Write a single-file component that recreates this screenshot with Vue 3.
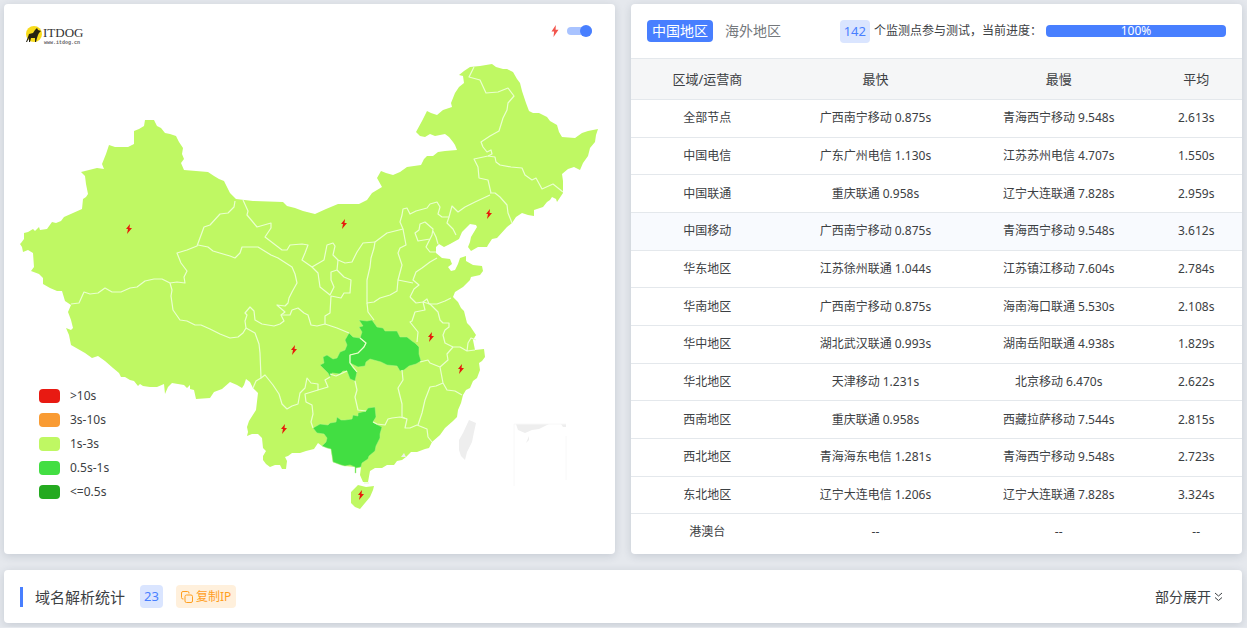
<script setup>
import { ref } from 'vue'

const showBolts = ref(true)
const region = ref('cn')

const legend = [
  { label: '>10s', tone: 'red' },
  { label: '3s-10s', tone: 'orange' },
  { label: '1s-3s', tone: 'lime' },
  { label: '0.5s-1s', tone: 'green' },
  { label: '<=0.5s', tone: 'dark' },
]

const rows = [
  ['全部节点', '广西南宁移动 0.875s', '青海西宁移动 9.548s', '2.613s'],
  ['中国电信', '广东广州电信 1.130s', '江苏苏州电信 4.707s', '1.550s'],
  ['中国联通', '重庆联通 0.958s', '辽宁大连联通 7.828s', '2.959s'],
  ['中国移动', '广西南宁移动 0.875s', '青海西宁移动 9.548s', '3.612s'],
  ['华东地区', '江苏徐州联通 1.044s', '江苏镇江移动 7.604s', '2.784s'],
  ['华南地区', '广西南宁移动 0.875s', '海南海口联通 5.530s', '2.108s'],
  ['华中地区', '湖北武汉联通 0.993s', '湖南岳阳联通 4.938s', '1.829s'],
  ['华北地区', '天津移动 1.231s', '北京移动 6.470s', '2.622s'],
  ['西南地区', '重庆联通 0.958s', '西藏拉萨移动 7.544s', '2.815s'],
  ['西北地区', '青海海东电信 1.281s', '青海西宁移动 9.548s', '2.723s'],
  ['东北地区', '辽宁大连电信 1.206s', '辽宁大连联通 7.828s', '3.324s'],
  ['港澳台', '--', '--', '--'],
]

const bolts = [[129, 229], [344, 224], [489, 214], [431, 337], [461, 369], [294, 350], [284, 429], [361, 495]]

const mainland = 'M21 243L24 239 24 233 28 232 33 229 35 231 39 227 40 230 47 229 52 222 56 223 61 221 64 217 73 213 82 209 83 199 86 197 88 194 86 184 85 176 81 172 89 170 97 168 104 169 102 164 106 154 109 145 115 147 128 147 134 144 134 131 139 129 144 126 145 120 154 120 157 126 161 128 165 133 170 134 176 136 179 142 183 148 182 154 184 159 181 163 184 170 208 172 214 176 219 179 224 181 230 193 236 199 253 201 283 202 287 206 295 208 303 211 315 214 326 209 338 204 359 204 367 200 372 193 382 187 377 178 381 171 386 173 393 175 400 172 407 167 421 165 424 159 427 156 433 156 438 152 445 151 457 150 455 145 453 142 449 137 445 134 435 136 430 134 425 137 420 136 416 132 422 121 427 111 431 113 437 115 443 110 452 107 451 103 455 93 459 87 464 83 463 76 459 75 464 71 470 67 480 66 492 64 496 67 503 69 507 69 513 72 517 79 520 83 522 91 526 103 529 111 533 113 539 113 547 117 550 121 557 125 559 132 562 137 575 138 582 133 588 131 598 129 596 135 595 142 590 148 588 156 583 163 580 170 574 167 568 169 562 174 563 181 563 193 557 202 556 199 552 197 550 200 547 202 543 207 534 210 534 216 528 215 522 213 516 217 512 223 507 227 497 238 492 239 488 245 487 247 478 247 471 251 468 247 470 242 471 237 477 227 476 225 470 224 462 232 459 239 450 244 444 247 439 244 436 247 436 253 442 258 450 259 452 264 448 267 451 271 455 270 458 264 460 258 466 256 466 261 473 265 482 266 483 271 480 275 471 277 470 280 463 287 455 292 453 297 458 302 461 308 464 311 467 323 470 326 476 335 473 340 475 350 484 349 485 357 482 361 479 363 480 370 477 378 473 381 470 388 466 390 463 395 461 403 458 410 457 417 453 421 445 428 440 435 432 442 429 448 425 449 417 452 411 452 406 457 402 460 397 461 394 465 387 465 382 468 375 468 370 471 368 482 363 482 360 475 361 467 356 468 356 473 355 473 355 467 345 466 333 462 331 449 322 446 318 443 314 449 306 451 300 453 297 453 292 453 288 456 285 457 287 461 286 469 282 469 280 465 275 465 270 467 266 464 263 460 263 456 266 451 263 448 262 438 258 434 252 434 247 436 248 432 247 427 249 421 256 410 258 393 253 388 250 382 246 379 244 385 242 388 237 385 230 382 222 389 214 392 210 398 196 399 194 390 190 389 190 385 187 388 184 385 178 384 172 383 168 387 165 394 164 384 157 387 150 387 143 386 140 384 138 386 134 381 130 380 125 377 121 377 119 373 113 368 105 361 98 356 92 358 85 353 71 345 69 335 66 328 71 330 73 328 71 320 68 312 71 305 65 301 62 291 57 291 50 288 43 284 43 278 39 274 31 271 34 267 33 253 28 250 23 252 22 247 20 244Z'

const chongqing = 'M349 333L353 337 360 338 366 343 364 347 358 353 350 355 350 363 353 368 357 372 355 381 350 379 347 371 343 371 340 374 332 373 330 377 328 373 325 370 320 365 324 363 323 357 327 355 333 359 337 358 340 352 345 350 347 345 345 340Z'
const hubei = 'M359 320L367 321 372 320 377 327 383 328 385 331 397 331 400 337 407 337 412 341 415 343 419 347 419 354 421 361 416 364 409 366 404 370 400 371 397 366 387 365 381 362 370 359 366 362 365 366 358 367 350 363 350 355 358 353 364 347 366 343 360 338 362 332 359 327 363 326Z'
const guangxi = 'M313 428L320 424 328 425 330 423 336 422 337 417 341 420 345 420 352 419 353 415 358 416 358 413 366 411 368 408 375 407 376 417 373 422 376 424 382 427 380 434 380 438 376 446 375 451 369 456 368 459 362 463 361 467 356 468 356 473 355 473 355 467 350 465 345 466 341 465 333 462 331 449 327 448 322 446 326 442 327 438 324 434 317 433Z'

const borders = [
  'M71 304L79 303 84 292 90 294 98 293 105 288 112 292 121 292 130 288 137 287 145 281 154 279 162 279 170 283 177 282 185 283 184 277 187 271 181 263 177 253 187 250 197 246 204 227 210 225 220 214 228 213 234 207 235 201',
  'M170 283L172 290 171 296 173 310 180 320 187 321 195 325 201 325 210 329 220 334 230 338 238 337 243 333 246 328 245 321 247 315 245 313 250 307 254 311 255 320 262 324 268 325 274 326 280 324 284 321 281 315 285 312 278 306 277 305 285 306 288 303 289 298 292 292 297 283 295 274 292 267 278 258 271 255 258 247 242 247 240 253 235 258 230 256 213 251 208 247 198 245',
  'M281 315L290 315 292 310 298 308 304 313 308 315 311 325 317 326 325 324 337 328 349 333',
  'M246 328L255 333 259 344 260 353 261 378 256 381 253 388',
  'M261 378L265 375 273 385 279 394 282 404 287 409 292 406 298 404 300 393 305 388 307 378 311 383 318 384 318 390 328 387 325 380 330 377',
  'M318 390L305 394 306 402 312 405 313 414 311 422 313 428',
  'M347 371L336 376 330 374M355 381L357 390 355 397 358 410 366 411',
  'M402 370L403 380 398 388 402 404 402 418',
  'M373 422L377 424 385 425 388 419 392 418 400 417 407 419 405 428 410 428 417 425 427 429 428 437 432 442',
  'M402 417L407 419M418 425L422 413 425 400 430 387 436 386 443 383',
  'M420 362L428 360 430 363 440 367 443 383 447 390 455 391 462 395',
  'M440 367L448 360 447 354 453 347 460 347 467 351 475 350M467 351L468 343 471 338 476 340',
  'M453 347L445 343 443 335 445 330 449 327 449 323 443 323 440 320 438 312 430 304 423 302 425 310 415 312 412 321 410 322 418 332 417 342',
  'M410 297L416 303 423 302 427 299 429 304 437 304 445 301 451 298',
  'M410 297L414 289 419 285 413 280 416 272 422 268 430 262 437 258M413 283L398 280 397 291 390 295 380 298 374 302 367 303 367 280 370 267 371 258 374 248 375 242 387 233 403 229 400 222 402 215 403 209 407 208 410 214 416 211 427 208 430 204 437 202 440 207 438 214 442 217 449 217 452 206 458 212 465 207 475 202 490 195',
  'M367 303L368 312 374 320M403 229L406 245 400 248 398 253 402 265 398 280',
  'M449 217L447 223 453 229 456 235M490 193L495 193 500 197 507 205 508 213 512 223',
  'M415 233L419 230 420 224 425 222 433 229 432 235 430 239 418 241ZM433 231L436 237 438 244M430 239L426 247 430 252 436 252',
  'M375 242L363 243 357 252 352 262 345 263 338 260 333 255 335 246 333 243 327 245 324 260 312 267 302 260 305 253 308 245 302 244 290 245 287 250 282 250 265 237 271 228 271 223 257 227 247 215 248 211 243 200',
  'M312 267L318 273 320 287 330 295 334 287 331 280 331 272 337 270 338 260M337 270L344 277 351 280 350 293 344 293 341 298 331 296 330 313 325 316 325 324',
  'M474 67L469 77 480 80 486 93 498 92 508 88 514 96 508 103 507 110 503 118 499 131 490 136 481 142 483 147 487 152 491 150 492 154 488 156 474 159 478 167 479 178 488 180 491 193',
  'M488 156L495 157 496 162 500 165 511 167 522 168 525 175 532 180 536 178 542 189 553 184 563 192',
]
</script>

<template>
  <main class="page">
    <section class="card map-card">
      <div class="map-bar">
        <svg class="logo" viewBox="0 0 60 22" role="img" aria-label="ITDOG">
          <circle cx="8" cy="9" r="8" fill="#f8dc1c" />
          <path d="M11 3l1 2 3 1-2 2-1 2-1 3-1 4h-1l0-4-4 0-1 4h-1l0-4-2 4h-1l2-5 1-3 4-1 2-3z" fill="#252211" />
          <text x="17" y="12" class="logo-name">ITDOG</text>
          <text x="18" y="19" class="logo-url">www.itdog.cn</text>
        </svg>
        <label class="bolt-switch">
          <svg viewBox="0 0 8 12" class="bolt-icon" aria-hidden="true"><path d="M4.800 0L.5 6.500h2.600L2.500 12 7.500 4.800H4.600z" /></svg>
          <input v-model="showBolts" type="checkbox" aria-label="闪电标记" />
        </label>
      </div>

      <svg class="map" viewBox="4 58 611 496" role="img" aria-label="中国地图">
        <path class="land" :d="mainland" />
        <path class="land" d="M351 492L358 485 366 487 374 486 373 490 370 497 365 503 360 509 355 507 351 503Z" />
        <path class="edge" d="M364 483L369 483" />
        <g class="fast">
          <path :d="chongqing" />
          <path :d="hubei" />
          <path :d="guangxi" />
        </g>
        <path v-for="d in borders" :key="d" class="edge" :d="d" />
        <path class="edge" d="M360 338L366 343 364 347 358 353 350 355 350 363 357 372" />
        <path class="muted" d="M469 420L476 423 474 432 472 442 467 452 465 460 461 456 459 450 459 440 463 433Z" />
        <path class="muted" d="M516 424H549L539 429 532 430 525 433 518 430ZM561 424H566V427L563 427ZM526 443L529 436 529 440ZM401 457L404 453 406 457Z" />
        <path class="inset" d="M514 486V424H566M566 436V480" />
        <g v-if="showBolts" class="bolts">
          <path v-for="[x, y] in bolts" :key="x" :d="`M${x + 1} ${y - 5}l-4 5h2l-1 5 5-6h-2.500z`" />
        </g>
      </svg>

      <ul class="legend">
        <li v-for="item in legend" :key="item.label"><i :class="item.tone"></i>{{ item.label }}</li>
      </ul>
    </section>

    <section class="card stats-card">
      <header class="stats-bar">
        <nav class="tabs">
          <button type="button" :class="{ active: region === 'cn' }" @click="region = 'cn'">中国地区</button>
          <button type="button" :class="{ active: region === 'sea' }" @click="region = 'sea'">海外地区</button>
        </nav>
        <div class="progress-info">
          <span class="badge">142</span>
          <span>个监测点参与测试，当前进度：</span>
          <div class="progress" role="progressbar" aria-valuenow="100">100%</div>
        </div>
      </header>
      <table>
        <thead>
          <tr><th>区域/运营商</th><th>最快</th><th>最慢</th><th>平均</th></tr>
        </thead>
        <tbody>
          <tr v-for="row in rows" :key="row[0]" :class="{ tinted: row[0] === '中国移动' }">
            <td v-for="(cell, i) in row" :key="i">{{ cell }}</td>
          </tr>
        </tbody>
      </table>
    </section>

    <section class="card dns-card">
      <h2>域名解析统计</h2>
      <span class="badge">23</span>
      <button type="button" class="copy">
        <svg viewBox="0 0 12 12" aria-hidden="true"><rect x="4" y="4" width="7.500" height="7.500" rx="1.500" /><path d="M2.500 8H2A1.500 1.500 0 0 1 .5 6.500V2A1.500 1.500 0 0 1 2 .5h4.500A1.500 1.500 0 0 1 8 2v.5" /></svg>
        <span>复制IP</span>
      </button>
      <button type="button" class="expand">
        <span>部分展开</span>
        <svg viewBox="0 0 9 10" aria-hidden="true"><path d="M1 1l3.500 3L8 1M1 5.500l3.500 3L8 5.500" /></svg>
      </button>
    </section>
  </main>
</template>

<style>
body {
  background: #e5e8ed;
}
</style>

<style scoped>
.page {
  display: grid;
  grid-template-columns: minmax(0, 1fr) minmax(0, 1fr);
  gap: 16px;
  padding: 4px 5px 4px 4px;
  color: #3c4043;
  font: 12px/18px "Noto Sans", "Noto Sans CJK SC", sans-serif;
}
.card {
  background: #fff;
  border-radius: 4px;
  box-shadow: 0 2px 8px rgba(40, 55, 80, 0.16);
}
button {
  border: 0;
  background: none;
  padding: 0;
  font: inherit;
  color: inherit;
  cursor: pointer;
}
.map-card {
  position: relative;
}
.map-bar {
  display: flex;
  align-items: center;
  justify-content: space-between;
  box-sizing: border-box;
  height: 54px;
  padding: 0 23px 0 22px;
}
.logo {
  width: 60px;
  height: 22px;
  margin-top: 10px;
}
.logo-name {
  font: 13px "Liberation Serif", serif;
  fill: #333;
}
.logo-url {
  font: bold 5px "Liberation Mono", monospace;
  fill: #666;
}
.bolt-switch {
  display: flex;
  align-items: center;
  gap: 8px;
}
.bolt-icon {
  width: 8px;
  height: 12px;
  fill: #f2554d;
}
.bolt-switch input {
  appearance: none;
  display: flex;
  align-items: center;
  width: 25px;
  height: 8px;
  margin: 0;
  border-radius: 4px;
  background: #a9c3ff;
}
.bolt-switch input::before {
  content: "";
  width: 12px;
  height: 12px;
  border-radius: 50%;
  background: #487fff;
}
.bolt-switch input:checked {
  justify-content: flex-end;
}
.map {
  display: block;
  width: 100%;
}
.land {
  fill: #bff863;
}
.fast {
  fill: #42de42;
  stroke: #b4f58a;
  stroke-width: 0.5;
}
.edge {
  fill: none;
  stroke: #eaffcf;
  stroke-width: 1.2;
  stroke-linejoin: round;
}
.muted {
  fill: #eee;
}
.inset {
  fill: none;
  stroke: #f8f8f8;
}
.bolts {
  fill: #e61b0c;
}
.legend {
  position: absolute;
  left: 35px;
  bottom: 50px;
  margin: 0;
  padding: 0;
  list-style: none;
}
.legend li {
  display: flex;
  align-items: center;
  gap: 10px;
  height: 24px;
}
.legend i {
  width: 21px;
  height: 14px;
  border-radius: 4px;
}
.red { background: #e81a12; }
.orange { background: #f99b33; }
.lime { background: #bff863; }
.green { background: #42de42; }
.dark { background: #24aa20; }
.stats-bar {
  display: flex;
  align-items: center;
  justify-content: space-between;
  height: 54px;
  padding: 0 16px;
}
.tabs {
  display: flex;
  gap: 7px;
}
.tabs button {
  height: 22px;
  padding: 0 5px;
  border-radius: 4px;
  font-size: 14px;
  line-height: 22px;
  color: #74787c;
}
.tabs .active {
  background: #487fff;
  color: #fff;
}
.progress-info {
  display: flex;
  align-items: center;
  gap: 4px;
}
.badge {
  height: 23px;
  padding: 0 4px;
  border-radius: 4px;
  background: #dae5ff;
  color: #487fff;
  font-size: 13px;
  line-height: 23px;
}
.progress {
  width: 180px;
  height: 12px;
  border-radius: 4px;
  background: #487fff;
  color: #fff;
  line-height: 12px;
  text-align: center;
}
table {
  width: 100%;
  height: 492px;
  table-layout: fixed;
  border-spacing: 0;
  text-align: center;
}
th,
td {
  padding: 0;
  border-bottom: 1px solid #e4e8ec;
}
th {
  box-sizing: border-box;
  height: 42px;
  border-top: 1px solid #e4e8ec;
  background: #f5f6f7;
  font-size: 13px;
  font-weight: 400;
}
tr:last-child td {
  border-bottom: 0;
}
th:nth-child(1) { width: 25%; }
th:nth-child(2) { width: 30%; }
th:nth-child(3) { width: 30%; }
th:nth-child(4) { width: 15%; }
.tinted {
  background: #f8fafe;
}
.dns-card {
  grid-column: 1 / -1;
  display: flex;
  align-items: center;
  height: 53px;
  padding: 0 19px 0 16px;
}
h2 {
  margin: 0 15px 0 0;
  padding-left: 12px;
  border-left: 3px solid #487fff;
  font-size: 15px;
  font-weight: 400;
  line-height: 20px;
}
.copy {
  display: flex;
  align-items: center;
  gap: 3px;
  height: 23px;
  margin-left: 13px;
  padding: 0 5px;
  border-radius: 4px;
  background: #fff0dc;
  color: #ff9f1f;
}
.copy svg {
  width: 12px;
  height: 12px;
  fill: none;
  stroke: currentColor;
}
.expand {
  display: flex;
  align-items: center;
  gap: 3px;
  margin-left: auto;
  font-size: 14px;
}
.expand svg {
  width: 9px;
  height: 10px;
  fill: none;
  stroke: currentColor;
}
</style>
